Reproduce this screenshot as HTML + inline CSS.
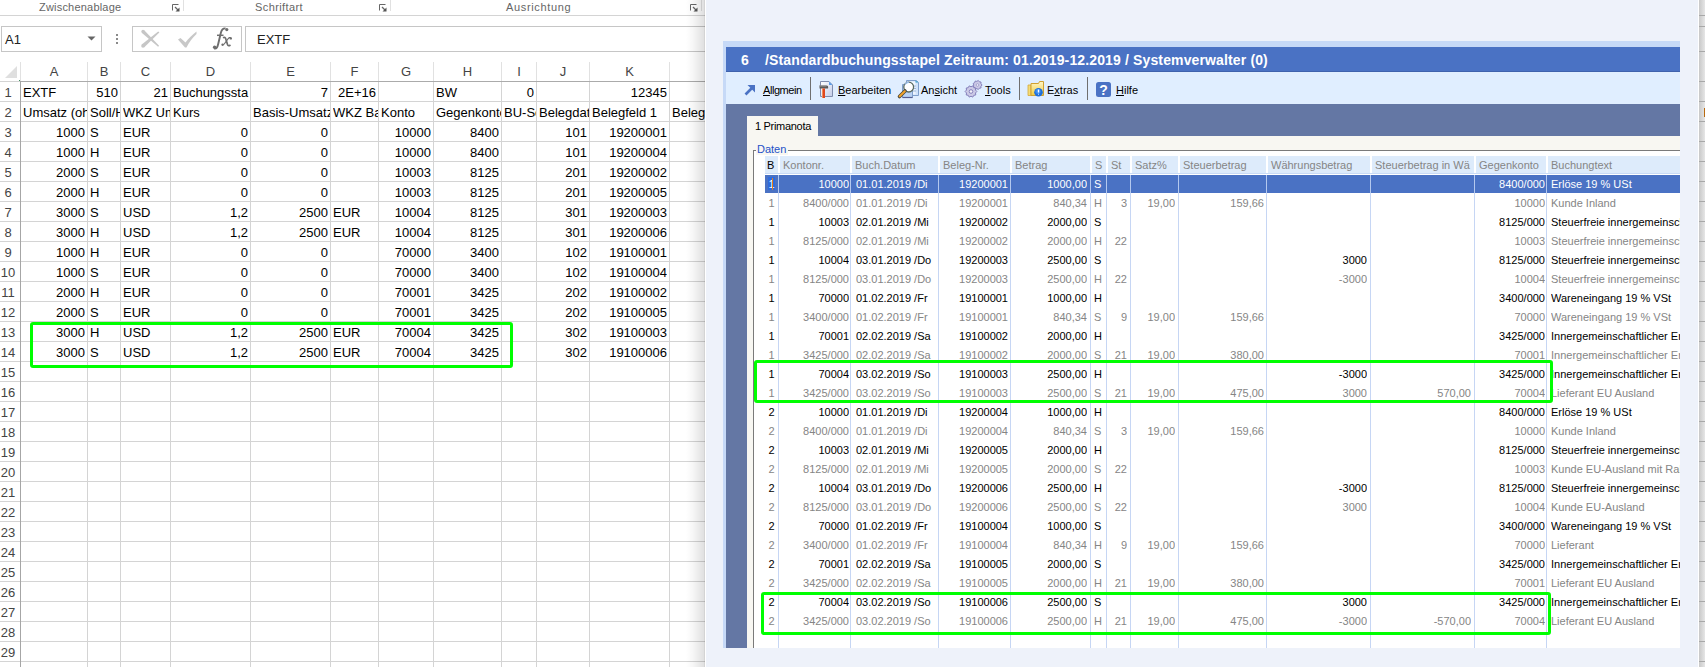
<!DOCTYPE html><html><head><meta charset="utf-8"><style>

*{box-sizing:border-box}
html,body{margin:0;padding:0;width:1705px;height:667px;overflow:hidden;background:#EEF2FA;font-family:"Liberation Sans", sans-serif}
.ab{position:absolute}
#xl{position:absolute;left:0;top:0;width:705px;height:667px;background:#fff;overflow:hidden}
.rl{position:absolute;font-size:11px;color:#666;white-space:nowrap}
.hl{position:absolute;height:1px}
.vl{position:absolute;width:1px}
.c{position:absolute;margin-top:1px;height:20px;line-height:20px;font-size:13px;color:#000;white-space:nowrap;overflow:hidden}
.r{text-align:right}
.ch{position:absolute;top:62px;height:19px;line-height:19px;font-size:13px;color:#444;text-align:center}
.rh{position:absolute;left:0;margin-top:1px;width:16px;height:20px;line-height:20px;font-size:13px;color:#444;text-align:center}
#dlg{position:absolute;left:723px;top:41px;width:957px;height:607px;background:#C6D9F7;overflow:hidden}
.t{position:absolute;height:19px;line-height:18px;font-size:11px;white-space:nowrap;overflow:hidden}
.k{color:#000}
.g{color:#858585}
.hd{position:absolute;top:156px;height:17px;background:#DDEBFB;font-size:11px;line-height:19px;color:#858585;white-space:nowrap;overflow:hidden;padding-left:3px}
.cl{position:absolute;top:173px;width:1px;height:475px;background:#C6D6F4}
.grn{position:absolute;border:3px solid #00FF00;border-radius:3px}

</style></head><body>
<div id="xl">
<div class="rl" style="left:39px;top:0px;line-height:14px;letter-spacing:0.2px">Zwischenablage</div>
<div class="rl" style="left:255px;top:0px;line-height:14px;letter-spacing:0.4px">Schriftart</div>
<div class="rl" style="left:506px;top:0px;line-height:14px;letter-spacing:0.65px">Ausrichtung</div>
<svg class="ab" style="left:172px;top:4px" width="8" height="8" viewBox="0 0 8 8"><path d="M0.5 6.5V0.5H6.5" stroke="#666" stroke-width="1" fill="none"/><path d="M3 3L6 6" stroke="#666" stroke-width="1.2"/><path d="M3.5 7.5H7.5V3.5Z" fill="#555"/></svg>
<svg class="ab" style="left:379px;top:4px" width="8" height="8" viewBox="0 0 8 8"><path d="M0.5 6.5V0.5H6.5" stroke="#666" stroke-width="1" fill="none"/><path d="M3 3L6 6" stroke="#666" stroke-width="1.2"/><path d="M3.5 7.5H7.5V3.5Z" fill="#555"/></svg>
<svg class="ab" style="left:690px;top:4px" width="8" height="8" viewBox="0 0 8 8"><path d="M0.5 6.5V0.5H6.5" stroke="#666" stroke-width="1" fill="none"/><path d="M3 3L6 6" stroke="#666" stroke-width="1.2"/><path d="M3.5 7.5H7.5V3.5Z" fill="#555"/></svg>
<div class="vl" style="left:183px;top:0;height:11px;background:#e1e1e1"></div>
<div class="vl" style="left:390px;top:0;height:11px;background:#e1e1e1"></div>
<div class="vl" style="left:701px;top:0;height:11px;background:#e1e1e1"></div>
<div class="hl" style="left:0;top:15px;width:705px;background:#d4d4d4"></div>
<div class="ab" style="left:1px;top:26px;width:101px;height:26px;border:1px solid #c6c6c6;background:#fff"></div>
<div class="ab" style="left:5px;top:28px;height:24px;line-height:24px;font-size:13px;color:#222">A1</div>
<svg class="ab" style="left:87px;top:36px" width="9" height="5"><path d="M0.5 0.5H8.5L4.5 4.5Z" fill="#666"/></svg>
<div class="ab" style="left:116px;top:34px;width:2px;height:2px;background:#8a8a8a"></div>
<div class="ab" style="left:116px;top:38px;width:2px;height:2px;background:#8a8a8a"></div>
<div class="ab" style="left:116px;top:42px;width:2px;height:2px;background:#8a8a8a"></div>
<div class="ab" style="left:132px;top:26px;width:110px;height:26px;border:1px solid #c6c6c6;background:#fff"></div>
<svg class="ab" style="left:140px;top:29px" width="22" height="20" viewBox="0 0 22 20"><g fill="#c6c6c6"><path d="M4.2 1.2L19.1 16.8L18.1 17.8L1.7 3.7Z"/><circle cx="3" cy="2.5" r="1.65"/><path d="M18.2 2.6Q19.2 3 19.3 3.6L4.3 18.3L1.7 15.5Z"/><circle cx="3" cy="16.9" r="1.8"/></g></svg>
<svg class="ab" style="left:177px;top:30px" width="22" height="19" viewBox="0 0 22 19"><path d="M1 9.5L3.5 8L8.5 12.5C11 9 15 5 19.5 1.5L19.5 4C15.5 8 12 12 9.5 17.5L8 17.5Z" fill="#c8c8c8"/></svg>
<svg class="ab" style="left:210px;top:26px" width="24" height="26" viewBox="0 0 24 26"><path d="M4.2 22.3C6.5 23 7.5 21 8.2 18L10.8 7C11.5 4 13 2.2 15.5 2.4" stroke="#6e6e6e" stroke-width="1.9" fill="none"/><circle cx="16.8" cy="3.6" r="1.6" fill="#6e6e6e"/><circle cx="4.6" cy="21.3" r="1.7" fill="#6e6e6e"/><path d="M7 9.3H13.5" stroke="#6e6e6e" stroke-width="1.5"/><path d="M13 11.8C14.5 11 15.5 11.5 16 13.5L17.5 18.5C18 20 19 20 20.5 19" stroke="#6e6e6e" stroke-width="1.7" fill="none"/><path d="M21 12C20 11 19 11.5 17.5 13.5L15 17C14 18.5 13 19.5 12 19" stroke="#6e6e6e" stroke-width="1.2" fill="none"/><circle cx="20.8" cy="12.4" r="1.2" fill="#6e6e6e"/><circle cx="12.6" cy="18.6" r="1.2" fill="#6e6e6e"/></svg>
<div class="ab" style="left:245px;top:26px;width:470px;height:26px;border:1px solid #c6c6c6;background:#fff"></div>
<div class="ab" style="left:257px;top:28px;height:24px;line-height:24px;font-size:13px;color:#222">EXTF</div>
<svg class="ab" style="left:5px;top:66px" width="13" height="12"><path d="M12 0V12H0Z" fill="#dfdfdf"/></svg>
<div class="ch" style="left:21px;width:66px">A</div>
<div class="ch" style="left:88px;width:32px">B</div>
<div class="ch" style="left:121px;width:49px">C</div>
<div class="ch" style="left:171px;width:79px">D</div>
<div class="ch" style="left:251px;width:79px">E</div>
<div class="ch" style="left:331px;width:47px">F</div>
<div class="ch" style="left:379px;width:54px">G</div>
<div class="ch" style="left:434px;width:67px">H</div>
<div class="ch" style="left:502px;width:34px">I</div>
<div class="ch" style="left:537px;width:52px">J</div>
<div class="ch" style="left:590px;width:79px">K</div>
<div class="ch" style="left:670px;width:90px">L</div>
<div class="vl" style="left:87px;top:62px;height:19px;background:#e1e1e1"></div>
<div class="vl" style="left:120px;top:62px;height:19px;background:#e1e1e1"></div>
<div class="vl" style="left:170px;top:62px;height:19px;background:#e1e1e1"></div>
<div class="vl" style="left:250px;top:62px;height:19px;background:#e1e1e1"></div>
<div class="vl" style="left:330px;top:62px;height:19px;background:#e1e1e1"></div>
<div class="vl" style="left:378px;top:62px;height:19px;background:#e1e1e1"></div>
<div class="vl" style="left:433px;top:62px;height:19px;background:#e1e1e1"></div>
<div class="vl" style="left:501px;top:62px;height:19px;background:#e1e1e1"></div>
<div class="vl" style="left:536px;top:62px;height:19px;background:#e1e1e1"></div>
<div class="vl" style="left:589px;top:62px;height:19px;background:#e1e1e1"></div>
<div class="vl" style="left:669px;top:62px;height:19px;background:#e1e1e1"></div>
<div class="vl" style="left:20px;top:62px;height:19px;background:#e1e1e1"></div>
<div class="hl" style="left:0;top:81px;width:20px;background:#d4d4d4"></div>
<div class="hl" style="left:20px;top:81px;width:685px;background:#ababab"></div>
<div class="hl" style="left:0;top:101px;width:20px;background:#d4d4d4"></div>
<div class="hl" style="left:21px;top:101px;width:684px;background:#d4d4d4"></div>
<div class="hl" style="left:0;top:121px;width:20px;background:#d4d4d4"></div>
<div class="hl" style="left:21px;top:121px;width:684px;background:#d4d4d4"></div>
<div class="hl" style="left:0;top:141px;width:20px;background:#d4d4d4"></div>
<div class="hl" style="left:21px;top:141px;width:684px;background:#d4d4d4"></div>
<div class="hl" style="left:0;top:161px;width:20px;background:#d4d4d4"></div>
<div class="hl" style="left:21px;top:161px;width:684px;background:#d4d4d4"></div>
<div class="hl" style="left:0;top:181px;width:20px;background:#d4d4d4"></div>
<div class="hl" style="left:21px;top:181px;width:684px;background:#d4d4d4"></div>
<div class="hl" style="left:0;top:201px;width:20px;background:#d4d4d4"></div>
<div class="hl" style="left:21px;top:201px;width:684px;background:#d4d4d4"></div>
<div class="hl" style="left:0;top:221px;width:20px;background:#d4d4d4"></div>
<div class="hl" style="left:21px;top:221px;width:684px;background:#d4d4d4"></div>
<div class="hl" style="left:0;top:241px;width:20px;background:#d4d4d4"></div>
<div class="hl" style="left:21px;top:241px;width:684px;background:#d4d4d4"></div>
<div class="hl" style="left:0;top:261px;width:20px;background:#d4d4d4"></div>
<div class="hl" style="left:21px;top:261px;width:684px;background:#d4d4d4"></div>
<div class="hl" style="left:0;top:281px;width:20px;background:#d4d4d4"></div>
<div class="hl" style="left:21px;top:281px;width:684px;background:#d4d4d4"></div>
<div class="hl" style="left:0;top:301px;width:20px;background:#d4d4d4"></div>
<div class="hl" style="left:21px;top:301px;width:684px;background:#d4d4d4"></div>
<div class="hl" style="left:0;top:321px;width:20px;background:#d4d4d4"></div>
<div class="hl" style="left:21px;top:321px;width:684px;background:#d4d4d4"></div>
<div class="hl" style="left:0;top:341px;width:20px;background:#d4d4d4"></div>
<div class="hl" style="left:21px;top:341px;width:684px;background:#d4d4d4"></div>
<div class="hl" style="left:0;top:361px;width:20px;background:#d4d4d4"></div>
<div class="hl" style="left:21px;top:361px;width:684px;background:#d4d4d4"></div>
<div class="hl" style="left:0;top:381px;width:20px;background:#d4d4d4"></div>
<div class="hl" style="left:21px;top:381px;width:684px;background:#d4d4d4"></div>
<div class="hl" style="left:0;top:401px;width:20px;background:#d4d4d4"></div>
<div class="hl" style="left:21px;top:401px;width:684px;background:#d4d4d4"></div>
<div class="hl" style="left:0;top:421px;width:20px;background:#d4d4d4"></div>
<div class="hl" style="left:21px;top:421px;width:684px;background:#d4d4d4"></div>
<div class="hl" style="left:0;top:441px;width:20px;background:#d4d4d4"></div>
<div class="hl" style="left:21px;top:441px;width:684px;background:#d4d4d4"></div>
<div class="hl" style="left:0;top:461px;width:20px;background:#d4d4d4"></div>
<div class="hl" style="left:21px;top:461px;width:684px;background:#d4d4d4"></div>
<div class="hl" style="left:0;top:481px;width:20px;background:#d4d4d4"></div>
<div class="hl" style="left:21px;top:481px;width:684px;background:#d4d4d4"></div>
<div class="hl" style="left:0;top:501px;width:20px;background:#d4d4d4"></div>
<div class="hl" style="left:21px;top:501px;width:684px;background:#d4d4d4"></div>
<div class="hl" style="left:0;top:521px;width:20px;background:#d4d4d4"></div>
<div class="hl" style="left:21px;top:521px;width:684px;background:#d4d4d4"></div>
<div class="hl" style="left:0;top:541px;width:20px;background:#d4d4d4"></div>
<div class="hl" style="left:21px;top:541px;width:684px;background:#d4d4d4"></div>
<div class="hl" style="left:0;top:561px;width:20px;background:#d4d4d4"></div>
<div class="hl" style="left:21px;top:561px;width:684px;background:#d4d4d4"></div>
<div class="hl" style="left:0;top:581px;width:20px;background:#d4d4d4"></div>
<div class="hl" style="left:21px;top:581px;width:684px;background:#d4d4d4"></div>
<div class="hl" style="left:0;top:601px;width:20px;background:#d4d4d4"></div>
<div class="hl" style="left:21px;top:601px;width:684px;background:#d4d4d4"></div>
<div class="hl" style="left:0;top:621px;width:20px;background:#d4d4d4"></div>
<div class="hl" style="left:21px;top:621px;width:684px;background:#d4d4d4"></div>
<div class="hl" style="left:0;top:641px;width:20px;background:#d4d4d4"></div>
<div class="hl" style="left:21px;top:641px;width:684px;background:#d4d4d4"></div>
<div class="hl" style="left:0;top:661px;width:20px;background:#d4d4d4"></div>
<div class="hl" style="left:21px;top:661px;width:684px;background:#d4d4d4"></div>
<div class="vl" style="left:87px;top:82px;height:585px;background:#d4d4d4"></div>
<div class="vl" style="left:120px;top:82px;height:585px;background:#d4d4d4"></div>
<div class="vl" style="left:170px;top:82px;height:585px;background:#d4d4d4"></div>
<div class="vl" style="left:250px;top:82px;height:585px;background:#d4d4d4"></div>
<div class="vl" style="left:330px;top:82px;height:585px;background:#d4d4d4"></div>
<div class="vl" style="left:378px;top:82px;height:585px;background:#d4d4d4"></div>
<div class="vl" style="left:433px;top:82px;height:585px;background:#d4d4d4"></div>
<div class="vl" style="left:501px;top:82px;height:585px;background:#d4d4d4"></div>
<div class="vl" style="left:536px;top:82px;height:585px;background:#d4d4d4"></div>
<div class="vl" style="left:589px;top:82px;height:585px;background:#d4d4d4"></div>
<div class="vl" style="left:669px;top:82px;height:585px;background:#d4d4d4"></div>
<div class="vl" style="left:20px;top:81px;height:586px;background:#a6a6a6"></div>
<div class="ab" style="left:19px;top:80px;width:1px;height:1px;background:#3f8f5f"></div>
<div class="rh" style="top:82px">1</div>
<div class="rh" style="top:102px">2</div>
<div class="rh" style="top:122px">3</div>
<div class="rh" style="top:142px">4</div>
<div class="rh" style="top:162px">5</div>
<div class="rh" style="top:182px">6</div>
<div class="rh" style="top:202px">7</div>
<div class="rh" style="top:222px">8</div>
<div class="rh" style="top:242px">9</div>
<div class="rh" style="top:262px">10</div>
<div class="rh" style="top:282px">11</div>
<div class="rh" style="top:302px">12</div>
<div class="rh" style="top:322px">13</div>
<div class="rh" style="top:342px">14</div>
<div class="rh" style="top:362px">15</div>
<div class="rh" style="top:382px">16</div>
<div class="rh" style="top:402px">17</div>
<div class="rh" style="top:422px">18</div>
<div class="rh" style="top:442px">19</div>
<div class="rh" style="top:462px">20</div>
<div class="rh" style="top:482px">21</div>
<div class="rh" style="top:502px">22</div>
<div class="rh" style="top:522px">23</div>
<div class="rh" style="top:542px">24</div>
<div class="rh" style="top:562px">25</div>
<div class="rh" style="top:582px">26</div>
<div class="rh" style="top:602px">27</div>
<div class="rh" style="top:622px">28</div>
<div class="rh" style="top:642px">29</div>
<div class="c" style="left:23px;top:82px;width:64px">EXTF</div>
<div class="c r" style="left:88px;top:82px;width:30px">510</div>
<div class="c r" style="left:121px;top:82px;width:47px">21</div>
<div class="c" style="left:173px;top:82px;width:77px">Buchungssta</div>
<div class="c r" style="left:251px;top:82px;width:77px">7</div>
<div class="c r" style="left:331px;top:82px;width:45px">2E+16</div>
<div class="c" style="left:436px;top:82px;width:65px">BW</div>
<div class="c r" style="left:502px;top:82px;width:32px">0</div>
<div class="c r" style="left:590px;top:82px;width:77px">12345</div>
<div class="c" style="left:23px;top:102px;width:64px">Umsatz (ohne Soll/Haben-Kz)</div>
<div class="c" style="left:90px;top:102px;width:30px">Soll/Haben</div>
<div class="c" style="left:123px;top:102px;width:47px">WKZ Umsatz</div>
<div class="c" style="left:173px;top:102px;width:77px">Kurs</div>
<div class="c" style="left:333px;top:102px;width:45px">WKZ Basis</div>
<div class="c" style="left:381px;top:102px;width:52px">Konto</div>
<div class="c" style="left:436px;top:102px;width:65px">Gegenkonto</div>
<div class="c" style="left:504px;top:102px;width:32px">BU-Schluessel</div>
<div class="c" style="left:539px;top:102px;width:50px">Belegdatum</div>
<div class="c" style="left:592px;top:102px;width:77px">Belegfeld 1</div>
<div class="c" style="left:672px;top:102px;width:88px">Belegfeld 2</div>
<div class="c r" style="left:21px;top:122px;width:64px">1000</div>
<div class="c" style="left:90px;top:122px;width:30px">S</div>
<div class="c" style="left:123px;top:122px;width:47px">EUR</div>
<div class="c r" style="left:171px;top:122px;width:77px">0</div>
<div class="c r" style="left:251px;top:122px;width:77px">0</div>
<div class="c r" style="left:379px;top:122px;width:52px">10000</div>
<div class="c r" style="left:434px;top:122px;width:65px">8400</div>
<div class="c r" style="left:537px;top:122px;width:50px">101</div>
<div class="c r" style="left:590px;top:122px;width:77px">19200001</div>
<div class="c r" style="left:21px;top:142px;width:64px">1000</div>
<div class="c" style="left:90px;top:142px;width:30px">H</div>
<div class="c" style="left:123px;top:142px;width:47px">EUR</div>
<div class="c r" style="left:171px;top:142px;width:77px">0</div>
<div class="c r" style="left:251px;top:142px;width:77px">0</div>
<div class="c r" style="left:379px;top:142px;width:52px">10000</div>
<div class="c r" style="left:434px;top:142px;width:65px">8400</div>
<div class="c r" style="left:537px;top:142px;width:50px">101</div>
<div class="c r" style="left:590px;top:142px;width:77px">19200004</div>
<div class="c r" style="left:21px;top:162px;width:64px">2000</div>
<div class="c" style="left:90px;top:162px;width:30px">S</div>
<div class="c" style="left:123px;top:162px;width:47px">EUR</div>
<div class="c r" style="left:171px;top:162px;width:77px">0</div>
<div class="c r" style="left:251px;top:162px;width:77px">0</div>
<div class="c r" style="left:379px;top:162px;width:52px">10003</div>
<div class="c r" style="left:434px;top:162px;width:65px">8125</div>
<div class="c r" style="left:537px;top:162px;width:50px">201</div>
<div class="c r" style="left:590px;top:162px;width:77px">19200002</div>
<div class="c r" style="left:21px;top:182px;width:64px">2000</div>
<div class="c" style="left:90px;top:182px;width:30px">H</div>
<div class="c" style="left:123px;top:182px;width:47px">EUR</div>
<div class="c r" style="left:171px;top:182px;width:77px">0</div>
<div class="c r" style="left:251px;top:182px;width:77px">0</div>
<div class="c r" style="left:379px;top:182px;width:52px">10003</div>
<div class="c r" style="left:434px;top:182px;width:65px">8125</div>
<div class="c r" style="left:537px;top:182px;width:50px">201</div>
<div class="c r" style="left:590px;top:182px;width:77px">19200005</div>
<div class="c r" style="left:21px;top:202px;width:64px">3000</div>
<div class="c" style="left:90px;top:202px;width:30px">S</div>
<div class="c" style="left:123px;top:202px;width:47px">USD</div>
<div class="c r" style="left:171px;top:202px;width:77px">1,2</div>
<div class="c r" style="left:251px;top:202px;width:77px">2500</div>
<div class="c" style="left:333px;top:202px;width:45px">EUR</div>
<div class="c r" style="left:379px;top:202px;width:52px">10004</div>
<div class="c r" style="left:434px;top:202px;width:65px">8125</div>
<div class="c r" style="left:537px;top:202px;width:50px">301</div>
<div class="c r" style="left:590px;top:202px;width:77px">19200003</div>
<div class="c r" style="left:21px;top:222px;width:64px">3000</div>
<div class="c" style="left:90px;top:222px;width:30px">H</div>
<div class="c" style="left:123px;top:222px;width:47px">USD</div>
<div class="c r" style="left:171px;top:222px;width:77px">1,2</div>
<div class="c r" style="left:251px;top:222px;width:77px">2500</div>
<div class="c" style="left:333px;top:222px;width:45px">EUR</div>
<div class="c r" style="left:379px;top:222px;width:52px">10004</div>
<div class="c r" style="left:434px;top:222px;width:65px">8125</div>
<div class="c r" style="left:537px;top:222px;width:50px">301</div>
<div class="c r" style="left:590px;top:222px;width:77px">19200006</div>
<div class="c r" style="left:21px;top:242px;width:64px">1000</div>
<div class="c" style="left:90px;top:242px;width:30px">H</div>
<div class="c" style="left:123px;top:242px;width:47px">EUR</div>
<div class="c r" style="left:171px;top:242px;width:77px">0</div>
<div class="c r" style="left:251px;top:242px;width:77px">0</div>
<div class="c r" style="left:379px;top:242px;width:52px">70000</div>
<div class="c r" style="left:434px;top:242px;width:65px">3400</div>
<div class="c r" style="left:537px;top:242px;width:50px">102</div>
<div class="c r" style="left:590px;top:242px;width:77px">19100001</div>
<div class="c r" style="left:21px;top:262px;width:64px">1000</div>
<div class="c" style="left:90px;top:262px;width:30px">S</div>
<div class="c" style="left:123px;top:262px;width:47px">EUR</div>
<div class="c r" style="left:171px;top:262px;width:77px">0</div>
<div class="c r" style="left:251px;top:262px;width:77px">0</div>
<div class="c r" style="left:379px;top:262px;width:52px">70000</div>
<div class="c r" style="left:434px;top:262px;width:65px">3400</div>
<div class="c r" style="left:537px;top:262px;width:50px">102</div>
<div class="c r" style="left:590px;top:262px;width:77px">19100004</div>
<div class="c r" style="left:21px;top:282px;width:64px">2000</div>
<div class="c" style="left:90px;top:282px;width:30px">H</div>
<div class="c" style="left:123px;top:282px;width:47px">EUR</div>
<div class="c r" style="left:171px;top:282px;width:77px">0</div>
<div class="c r" style="left:251px;top:282px;width:77px">0</div>
<div class="c r" style="left:379px;top:282px;width:52px">70001</div>
<div class="c r" style="left:434px;top:282px;width:65px">3425</div>
<div class="c r" style="left:537px;top:282px;width:50px">202</div>
<div class="c r" style="left:590px;top:282px;width:77px">19100002</div>
<div class="c r" style="left:21px;top:302px;width:64px">2000</div>
<div class="c" style="left:90px;top:302px;width:30px">S</div>
<div class="c" style="left:123px;top:302px;width:47px">EUR</div>
<div class="c r" style="left:171px;top:302px;width:77px">0</div>
<div class="c r" style="left:251px;top:302px;width:77px">0</div>
<div class="c r" style="left:379px;top:302px;width:52px">70001</div>
<div class="c r" style="left:434px;top:302px;width:65px">3425</div>
<div class="c r" style="left:537px;top:302px;width:50px">202</div>
<div class="c r" style="left:590px;top:302px;width:77px">19100005</div>
<div class="c r" style="left:21px;top:322px;width:64px">3000</div>
<div class="c" style="left:90px;top:322px;width:30px">H</div>
<div class="c" style="left:123px;top:322px;width:47px">USD</div>
<div class="c r" style="left:171px;top:322px;width:77px">1,2</div>
<div class="c r" style="left:251px;top:322px;width:77px">2500</div>
<div class="c" style="left:333px;top:322px;width:45px">EUR</div>
<div class="c r" style="left:379px;top:322px;width:52px">70004</div>
<div class="c r" style="left:434px;top:322px;width:65px">3425</div>
<div class="c r" style="left:537px;top:322px;width:50px">302</div>
<div class="c r" style="left:590px;top:322px;width:77px">19100003</div>
<div class="c r" style="left:21px;top:342px;width:64px">3000</div>
<div class="c" style="left:90px;top:342px;width:30px">S</div>
<div class="c" style="left:123px;top:342px;width:47px">USD</div>
<div class="c r" style="left:171px;top:342px;width:77px">1,2</div>
<div class="c r" style="left:251px;top:342px;width:77px">2500</div>
<div class="c" style="left:333px;top:342px;width:45px">EUR</div>
<div class="c r" style="left:379px;top:342px;width:52px">70004</div>
<div class="c r" style="left:434px;top:342px;width:65px">3425</div>
<div class="c r" style="left:537px;top:342px;width:50px">302</div>
<div class="c r" style="left:590px;top:342px;width:77px">19100006</div>
<div class="c" style="left:253px;top:102px;width:77px">Basis-Umsatz</div>
<div class="ab" style="left:686px;top:0;width:18px;height:667px;background:linear-gradient(to right,rgba(0,0,0,0),rgba(0,0,0,0.03) 35%,rgba(0,0,0,0.12))"></div>
<div class="ab" style="left:704px;top:0;width:1px;height:667px;background:rgba(0,0,0,0.17)"></div>
<div class="grn" style="left:30px;top:322px;width:483px;height:46px"></div>
</div>
<div class="ab" style="left:705px;top:0;width:1px;height:667px;background:#fff"></div>
<div class="ab" style="left:1698px;top:0;width:1px;height:667px;background:#fff"></div>
<div class="ab" style="left:1699px;top:0;width:6px;height:667px;background:linear-gradient(to right,#c8c8c8,#e6e6e6)"></div>
<div class="hl" style="left:1699px;top:81px;width:6px;background:#a8a8a8"></div>
<div class="hl" style="left:1699px;top:101px;width:6px;background:#a8a8a8"></div>
<div class="hl" style="left:1699px;top:121px;width:6px;background:#a8a8a8"></div>
<div class="hl" style="left:1699px;top:141px;width:6px;background:#a8a8a8"></div>
<div class="hl" style="left:1699px;top:161px;width:6px;background:#a8a8a8"></div>
<div class="hl" style="left:1699px;top:181px;width:6px;background:#a8a8a8"></div>
<div class="hl" style="left:1699px;top:201px;width:6px;background:#a8a8a8"></div>
<div class="hl" style="left:1699px;top:221px;width:6px;background:#a8a8a8"></div>
<div class="hl" style="left:1699px;top:241px;width:6px;background:#a8a8a8"></div>
<div class="hl" style="left:1699px;top:261px;width:6px;background:#a8a8a8"></div>
<div class="hl" style="left:1699px;top:281px;width:6px;background:#a8a8a8"></div>
<div class="hl" style="left:1699px;top:301px;width:6px;background:#a8a8a8"></div>
<div class="hl" style="left:1699px;top:321px;width:6px;background:#a8a8a8"></div>
<div class="hl" style="left:1699px;top:341px;width:6px;background:#a8a8a8"></div>
<div class="hl" style="left:1699px;top:361px;width:6px;background:#a8a8a8"></div>
<div class="hl" style="left:1699px;top:381px;width:6px;background:#a8a8a8"></div>
<div class="hl" style="left:1699px;top:401px;width:6px;background:#a8a8a8"></div>
<div class="hl" style="left:1699px;top:421px;width:6px;background:#a8a8a8"></div>
<div class="hl" style="left:1699px;top:441px;width:6px;background:#a8a8a8"></div>
<div class="hl" style="left:1699px;top:461px;width:6px;background:#a8a8a8"></div>
<div class="hl" style="left:1699px;top:481px;width:6px;background:#a8a8a8"></div>
<div class="hl" style="left:1699px;top:501px;width:6px;background:#a8a8a8"></div>
<div class="hl" style="left:1699px;top:521px;width:6px;background:#a8a8a8"></div>
<div class="hl" style="left:1699px;top:541px;width:6px;background:#a8a8a8"></div>
<div class="hl" style="left:1699px;top:561px;width:6px;background:#a8a8a8"></div>
<div class="hl" style="left:1699px;top:581px;width:6px;background:#a8a8a8"></div>
<div class="hl" style="left:1699px;top:601px;width:6px;background:#a8a8a8"></div>
<div class="hl" style="left:1699px;top:621px;width:6px;background:#a8a8a8"></div>
<div class="hl" style="left:1699px;top:641px;width:6px;background:#a8a8a8"></div>
<div class="hl" style="left:1699px;top:661px;width:6px;background:#a8a8a8"></div>
<div class="hl" style="left:1699px;top:15px;width:6px;background:#a8a8a8"></div>
<div class="hl" style="left:1699px;top:26px;width:6px;background:#a8a8a8"></div>
<div class="hl" style="left:1699px;top:51px;width:6px;background:#a8a8a8"></div>
<div class="ab" style="left:1704px;top:108px;width:1px;height:9px;background:#b86a10"></div>
<div id="dlg">
<div class="ab" style="left:3px;top:6px;width:960px;height:25px;background:#4A72C4"></div>
<div class="ab" style="left:3px;top:30px;width:960px;height:1px;background:#3F62AD"></div>
<div class="ab" style="left:3px;top:31px;width:960px;height:32px;background:#E0EEFF"></div>
<div class="ab" style="left:3px;top:63px;width:960px;height:550px;background:#6477A4"></div>
<div class="ab" style="left:24px;top:95px;width:960px;height:520px;background:#F8F7F2"></div>
<div class="ab" style="left:24px;top:75px;width:71px;height:20px;background:#F8F7F2"></div>
<div class="ab" style="left:18px;top:7px;height:25px;line-height:25px;font-weight:bold;font-size:14px;color:#fff;white-space:nowrap">6</div>
<div class="ab" style="left:42px;top:7px;height:25px;line-height:25px;font-weight:bold;font-size:14px;color:#fff;white-space:nowrap;letter-spacing:0.135px">/Standardbuchungsstapel Zeitraum: 01.2019-12.2019 / Systemverwalter (0)</div>
<div class="ab" style="left:40px;top:40px;height:18px;line-height:18px;font-size:11px;color:#000;white-space:nowrap;letter-spacing:-0.45px"><u>A</u>llgmein</div>
<div class="ab" style="left:115px;top:40px;height:18px;line-height:18px;font-size:11px;color:#000;white-space:nowrap;letter-spacing:0px"><u>B</u>earbeiten</div>
<div class="ab" style="left:198px;top:40px;height:18px;line-height:18px;font-size:11px;color:#000;white-space:nowrap;letter-spacing:0px">An<u>s</u>icht</div>
<div class="ab" style="left:262px;top:40px;height:18px;line-height:18px;font-size:11px;color:#000;white-space:nowrap;letter-spacing:0px"><u>T</u>ools</div>
<div class="ab" style="left:324px;top:40px;height:18px;line-height:18px;font-size:11px;color:#000;white-space:nowrap;letter-spacing:0px">E<u>x</u>tras</div>
<div class="ab" style="left:393px;top:40px;height:18px;line-height:18px;font-size:11px;color:#000;white-space:nowrap;letter-spacing:0px"><u>H</u>ilfe</div>
<div class="ab" style="left:87px;top:36px;width:1px;height:23px;background:#6f6f6f"></div>
<div class="ab" style="left:296px;top:36px;width:1px;height:23px;background:#6f6f6f"></div>
<div class="ab" style="left:364px;top:36px;width:1px;height:23px;background:#6f6f6f"></div>
<svg class="ab" style="left:21px;top:43px" width="12" height="12" viewBox="0 0 12 12"><path d="M1.5 10.5L9 3" stroke="#4A72C4" stroke-width="2.6"/><path d="M3.5 1H11V8.5Z" fill="#4A72C4"/></svg>
<svg class="ab" style="left:96px;top:39px" width="16" height="19" viewBox="0 0 16 19"><defs><linearGradient id="dg" x1="0" y1="0" x2="1" y2="1"><stop offset="0" stop-color="#ffffff"/><stop offset="1" stop-color="#c3cdea"/></linearGradient></defs><path d="M1.5 1.5H10L13.5 5V16.5H1.5Z" fill="url(#dg)" stroke="#7f8cae"/><path d="M10 1.5V5H13.5Z" fill="#5b9be6"/><path d="M0.5 5.5H7.5C9 5.5 9.5 6.5 9 8.5H0.5Z" fill="#5a5a5a"/><path d="M0.5 5.5H7.5V6.5H0.5Z" fill="#9a9a9a"/><path d="M3 8.5H6V18H3Z" fill="#e0461e"/><path d="M3 8.5H4V18H3Z" fill="#f08a5a"/></svg>
<svg class="ab" style="left:173px;top:37px" width="26" height="22" viewBox="0 0 26 22"><path d="M10.5 2.5H20.5L22.5 4.5V17.5H10.5Z" fill="#cfe2fa" stroke="#7f9fcc"/><path d="M11.5 3.5H19.5V16.5H11.5Z" fill="#eef5fe"/><path d="M19.5 2.5V4.5H22.5" fill="#3aa0c8"/><path d="M17 8H20M17 10.5H20M17 13H20" stroke="#8aaad6" stroke-width="0.8"/><path d="M6.5 6.5H16.5V19.5H6.5Z" fill="#b9d2f4" stroke="#7f9fcc"/><path d="M6.5 19.5H16.5" stroke="#565c90" stroke-width="1.2"/><circle cx="12.7" cy="9.1" r="4.9" fill="#ffffff" stroke="#5a6a60" stroke-width="1.3"/><path d="M9 6.5A4.5 4.5 0 0 1 13 4.4" stroke="#9cc0ee" stroke-width="1.1" fill="none"/><path d="M9 13L3.5 18.5" stroke="#4a4a40" stroke-width="3.6" stroke-linecap="round"/><path d="M8.8 13.2L3.7 18.3" stroke="#f2a22a" stroke-width="2" stroke-linecap="round"/></svg>
<svg class="ab" style="left:240px;top:38px" width="22" height="21" viewBox="0 0 22 21"><g fill="#cbc9e6" stroke="#7d77b5" stroke-width="0.9"><polygon points="19.10,6.00 17.96,7.26 18.02,8.96 16.34,9.19 15.30,10.53 13.86,9.62 12.20,9.98 11.68,8.37 10.18,7.57 10.82,6.00 10.18,4.43 11.68,3.63 12.20,2.02 13.86,2.38 15.30,1.47 16.34,2.81 18.02,3.04 17.96,4.74"/><polygon points="13.90,12.50 12.49,13.96 12.77,15.97 10.77,16.32 9.82,18.11 8.00,17.22 6.18,18.11 5.23,16.32 3.23,15.97 3.51,13.96 2.10,12.50 3.51,11.04 3.23,9.03 5.23,8.68 6.18,6.89 8.00,7.78 9.82,6.89 10.77,8.68 12.77,9.03 12.49,11.04"/></g><circle cx="14.5" cy="6" r="1.3" fill="#eeeef8" stroke="#8a84bd" stroke-width="0.6"/><circle cx="8" cy="12.5" r="1.8" fill="#f4f4fb" stroke="#7d77b5" stroke-width="0.9"/></svg>
<svg class="ab" style="left:303px;top:38px" width="20" height="20" viewBox="0 0 20 20"><defs><linearGradient id="fg" x1="0" y1="0" x2="0" y2="1"><stop offset="0" stop-color="#fff6c8"/><stop offset="1" stop-color="#f0cc40"/></linearGradient></defs><path d="M2 6H5V16.5H2Z" fill="#f4dc78" stroke="#d4a838" stroke-width="0.8"/><path d="M5 4.5H12.5L13.5 2.5H17.5V16.5H5Z" fill="url(#fg)" stroke="#d0a030" stroke-width="1"/><circle cx="12.5" cy="13.2" r="4.3" fill="#1f6fd8"/><circle cx="12" cy="12.3" r="2.6" fill="#3a8cf0"/><path d="M12.5 10.5V13.5" stroke="#fff" stroke-width="1.4"/><path d="M12.5 14.8V15.6" stroke="#fff" stroke-width="1"/></svg>
<svg class="ab" style="left:373px;top:41px" width="15" height="15" viewBox="0 0 15 15"><rect x="0" y="0" width="15" height="15" rx="2.5" fill="#4A72C4"/><text x="7.6" y="13" text-anchor="middle" font-family="Liberation Sans" font-weight="bold" font-size="14" fill="#fff">?</text></svg>
<div class="ab" style="left:32px;top:77px;height:16px;line-height:16px;font-size:11px;color:#000;white-space:nowrap;letter-spacing:-0.3px">1 Primanota</div>
<div class="ab" style="left:31px;top:110px;width:960px;height:500px;background:#fff"></div>
<div class="ab" style="left:30px;top:109px;width:1px;height:500px;background:#7a7a7a"></div>
<div class="ab" style="left:30px;top:109px;width:960px;height:1px;background:#7a7a7a"></div>
<div class="ab" style="left:33px;top:102px;width:32px;height:12px;background:#F8F7F2"></div>
<div class="ab" style="left:34px;top:101px;height:14px;line-height:14px;font-size:11px;color:#2452C8;white-space:nowrap">Daten</div>
<div class="hd" style="left:42px;top:115px;width:13px;color:#000;padding-left:2px">B</div>
<div class="hd" style="left:57px;top:115px;width:70px;color:#858585;padding-left:3px">Kontonr.</div>
<div class="hd" style="left:129px;top:115px;width:86px;color:#858585;padding-left:3px">Buch.Datum</div>
<div class="hd" style="left:217px;top:115px;width:70px;color:#858585;padding-left:3px">Beleg-Nr.</div>
<div class="hd" style="left:289px;top:115px;width:78px;color:#858585;padding-left:3px">Betrag</div>
<div class="hd" style="left:369px;top:115px;width:14px;color:#858585;padding-left:3px">S</div>
<div class="hd" style="left:385px;top:115px;width:22px;color:#858585;padding-left:3px">St</div>
<div class="hd" style="left:409px;top:115px;width:46px;color:#858585;padding-left:3px">Satz%</div>
<div class="hd" style="left:457px;top:115px;width:86px;color:#858585;padding-left:3px">Steuerbetrag</div>
<div class="hd" style="left:545px;top:115px;width:102px;color:#858585;padding-left:3px">Währungsbetrag</div>
<div class="hd" style="left:649px;top:115px;width:102px;color:#858585;padding-left:3px">Steuerbetrag in Wä</div>
<div class="hd" style="left:753px;top:115px;width:70px;color:#858585;padding-left:3px">Gegenkonto</div>
<div class="hd" style="left:825px;top:115px;width:152px;color:#858585;padding-left:3px">Buchungtext</div>
<div class="ab" style="left:42px;top:134px;width:960px;height:18px;background:#4A72C4"></div>
<div class="ab" style="left:55px;top:134px;width:1px;height:475px;background:#C6D6F4"></div>
<div class="ab" style="left:127px;top:134px;width:1px;height:475px;background:#C6D6F4"></div>
<div class="ab" style="left:215px;top:134px;width:1px;height:475px;background:#C6D6F4"></div>
<div class="ab" style="left:287px;top:134px;width:1px;height:475px;background:#C6D6F4"></div>
<div class="ab" style="left:367px;top:134px;width:1px;height:475px;background:#C6D6F4"></div>
<div class="ab" style="left:383px;top:134px;width:1px;height:475px;background:#C6D6F4"></div>
<div class="ab" style="left:407px;top:134px;width:1px;height:475px;background:#C6D6F4"></div>
<div class="ab" style="left:455px;top:134px;width:1px;height:475px;background:#C6D6F4"></div>
<div class="ab" style="left:543px;top:134px;width:1px;height:475px;background:#C6D6F4"></div>
<div class="ab" style="left:647px;top:134px;width:1px;height:475px;background:#C6D6F4"></div>
<div class="ab" style="left:751px;top:134px;width:1px;height:475px;background:#C6D6F4"></div>
<div class="ab" style="left:823px;top:134px;width:1px;height:475px;background:#C6D6F4"></div>
<div class="ab" style="left:42px;top:132px;width:960px;height:1px;background:#C8DAF6"></div>
<div class="ab" style="left:55px;top:134px;width:1px;height:18px;background:#b4c8ee"></div>
<div class="ab" style="left:127px;top:134px;width:1px;height:18px;background:#b4c8ee"></div>
<div class="ab" style="left:215px;top:134px;width:1px;height:18px;background:#b4c8ee"></div>
<div class="ab" style="left:287px;top:134px;width:1px;height:18px;background:#b4c8ee"></div>
<div class="ab" style="left:367px;top:134px;width:1px;height:18px;background:#b4c8ee"></div>
<div class="ab" style="left:383px;top:134px;width:1px;height:18px;background:#b4c8ee"></div>
<div class="ab" style="left:407px;top:134px;width:1px;height:18px;background:#b4c8ee"></div>
<div class="ab" style="left:455px;top:134px;width:1px;height:18px;background:#b4c8ee"></div>
<div class="ab" style="left:543px;top:134px;width:1px;height:18px;background:#b4c8ee"></div>
<div class="ab" style="left:647px;top:134px;width:1px;height:18px;background:#b4c8ee"></div>
<div class="ab" style="left:751px;top:134px;width:1px;height:18px;background:#b4c8ee"></div>
<div class="ab" style="left:823px;top:134px;width:1px;height:18px;background:#b4c8ee"></div>
<div class="ab" style="left:45px;top:136px;width:7px;height:13px;background:#2E6BDD"></div>
<div class="t k" style="left:42px;top:134px;width:13px;text-align:center;color:#fff;">1</div>
<div class="t k" style="left:56px;top:134px;width:70px;text-align:right;color:#fff;">10000</div>
<div class="t k" style="left:133px;top:134px;width:82px;color:#fff;">01.01.2019 /Di</div>
<div class="t k" style="left:216px;top:134px;width:69px;text-align:right;color:#fff;">19200001</div>
<div class="t k" style="left:288px;top:134px;width:76px;text-align:right;color:#fff;">1000,00</div>
<div class="t k" style="left:371px;top:134px;width:12px;color:#fff;">S</div>
<div class="t k" style="left:752px;top:134px;width:70px;text-align:right;color:#fff;">8400/000</div>
<div class="t k" style="left:828px;top:134px;width:149px;color:#fff;">Erlöse 19 % USt</div>
<div class="t g" style="left:42px;top:153px;width:13px;text-align:center;">1</div>
<div class="t g" style="left:56px;top:153px;width:70px;text-align:right;">8400/000</div>
<div class="t g" style="left:133px;top:153px;width:82px;">01.01.2019 /Di</div>
<div class="t g" style="left:216px;top:153px;width:69px;text-align:right;">19200001</div>
<div class="t g" style="left:288px;top:153px;width:76px;text-align:right;">840,34</div>
<div class="t g" style="left:371px;top:153px;width:12px;">H</div>
<div class="t g" style="left:384px;top:153px;width:20px;text-align:right;">3</div>
<div class="t g" style="left:408px;top:153px;width:44px;text-align:right;">19,00</div>
<div class="t g" style="left:456px;top:153px;width:85px;text-align:right;">159,66</div>
<div class="t g" style="left:752px;top:153px;width:70px;text-align:right;">10000</div>
<div class="t g" style="left:828px;top:153px;width:149px;">Kunde Inland</div>
<div class="t k" style="left:42px;top:172px;width:13px;text-align:center;">1</div>
<div class="t k" style="left:56px;top:172px;width:70px;text-align:right;">10003</div>
<div class="t k" style="left:133px;top:172px;width:82px;">02.01.2019 /Mi</div>
<div class="t k" style="left:216px;top:172px;width:69px;text-align:right;">19200002</div>
<div class="t k" style="left:288px;top:172px;width:76px;text-align:right;">2000,00</div>
<div class="t k" style="left:371px;top:172px;width:12px;">S</div>
<div class="t k" style="left:752px;top:172px;width:70px;text-align:right;">8125/000</div>
<div class="t k" style="left:828px;top:172px;width:149px;">Steuerfreie innergemeinschaftliche</div>
<div class="t g" style="left:42px;top:191px;width:13px;text-align:center;">1</div>
<div class="t g" style="left:56px;top:191px;width:70px;text-align:right;">8125/000</div>
<div class="t g" style="left:133px;top:191px;width:82px;">02.01.2019 /Mi</div>
<div class="t g" style="left:216px;top:191px;width:69px;text-align:right;">19200002</div>
<div class="t g" style="left:288px;top:191px;width:76px;text-align:right;">2000,00</div>
<div class="t g" style="left:371px;top:191px;width:12px;">H</div>
<div class="t g" style="left:384px;top:191px;width:20px;text-align:right;">22</div>
<div class="t g" style="left:752px;top:191px;width:70px;text-align:right;">10003</div>
<div class="t g" style="left:828px;top:191px;width:149px;">Steuerfreie innergemeinschaftliche</div>
<div class="t k" style="left:42px;top:210px;width:13px;text-align:center;">1</div>
<div class="t k" style="left:56px;top:210px;width:70px;text-align:right;">10004</div>
<div class="t k" style="left:133px;top:210px;width:82px;">03.01.2019 /Do</div>
<div class="t k" style="left:216px;top:210px;width:69px;text-align:right;">19200003</div>
<div class="t k" style="left:288px;top:210px;width:76px;text-align:right;">2500,00</div>
<div class="t k" style="left:371px;top:210px;width:12px;">S</div>
<div class="t k" style="left:544px;top:210px;width:100px;text-align:right;">3000</div>
<div class="t k" style="left:752px;top:210px;width:70px;text-align:right;">8125/000</div>
<div class="t k" style="left:828px;top:210px;width:149px;">Steuerfreie innergemeinschaftliche</div>
<div class="t g" style="left:42px;top:229px;width:13px;text-align:center;">1</div>
<div class="t g" style="left:56px;top:229px;width:70px;text-align:right;">8125/000</div>
<div class="t g" style="left:133px;top:229px;width:82px;">03.01.2019 /Do</div>
<div class="t g" style="left:216px;top:229px;width:69px;text-align:right;">19200003</div>
<div class="t g" style="left:288px;top:229px;width:76px;text-align:right;">2500,00</div>
<div class="t g" style="left:371px;top:229px;width:12px;">H</div>
<div class="t g" style="left:384px;top:229px;width:20px;text-align:right;">22</div>
<div class="t g" style="left:544px;top:229px;width:100px;text-align:right;">-3000</div>
<div class="t g" style="left:752px;top:229px;width:70px;text-align:right;">10004</div>
<div class="t g" style="left:828px;top:229px;width:149px;">Steuerfreie innergemeinschaftliche</div>
<div class="t k" style="left:42px;top:248px;width:13px;text-align:center;">1</div>
<div class="t k" style="left:56px;top:248px;width:70px;text-align:right;">70000</div>
<div class="t k" style="left:133px;top:248px;width:82px;">01.02.2019 /Fr</div>
<div class="t k" style="left:216px;top:248px;width:69px;text-align:right;">19100001</div>
<div class="t k" style="left:288px;top:248px;width:76px;text-align:right;">1000,00</div>
<div class="t k" style="left:371px;top:248px;width:12px;">H</div>
<div class="t k" style="left:752px;top:248px;width:70px;text-align:right;">3400/000</div>
<div class="t k" style="left:828px;top:248px;width:149px;">Wareneingang 19 % VSt</div>
<div class="t g" style="left:42px;top:267px;width:13px;text-align:center;">1</div>
<div class="t g" style="left:56px;top:267px;width:70px;text-align:right;">3400/000</div>
<div class="t g" style="left:133px;top:267px;width:82px;">01.02.2019 /Fr</div>
<div class="t g" style="left:216px;top:267px;width:69px;text-align:right;">19100001</div>
<div class="t g" style="left:288px;top:267px;width:76px;text-align:right;">840,34</div>
<div class="t g" style="left:371px;top:267px;width:12px;">S</div>
<div class="t g" style="left:384px;top:267px;width:20px;text-align:right;">9</div>
<div class="t g" style="left:408px;top:267px;width:44px;text-align:right;">19,00</div>
<div class="t g" style="left:456px;top:267px;width:85px;text-align:right;">159,66</div>
<div class="t g" style="left:752px;top:267px;width:70px;text-align:right;">70000</div>
<div class="t g" style="left:828px;top:267px;width:149px;">Wareneingang 19 % VSt</div>
<div class="t k" style="left:42px;top:286px;width:13px;text-align:center;">1</div>
<div class="t k" style="left:56px;top:286px;width:70px;text-align:right;">70001</div>
<div class="t k" style="left:133px;top:286px;width:82px;">02.02.2019 /Sa</div>
<div class="t k" style="left:216px;top:286px;width:69px;text-align:right;">19100002</div>
<div class="t k" style="left:288px;top:286px;width:76px;text-align:right;">2000,00</div>
<div class="t k" style="left:371px;top:286px;width:12px;">H</div>
<div class="t k" style="left:752px;top:286px;width:70px;text-align:right;">3425/000</div>
<div class="t k" style="left:828px;top:286px;width:149px;">Innergemeinschaftlicher Erwerb</div>
<div class="t g" style="left:42px;top:305px;width:13px;text-align:center;">1</div>
<div class="t g" style="left:56px;top:305px;width:70px;text-align:right;">3425/000</div>
<div class="t g" style="left:133px;top:305px;width:82px;">02.02.2019 /Sa</div>
<div class="t g" style="left:216px;top:305px;width:69px;text-align:right;">19100002</div>
<div class="t g" style="left:288px;top:305px;width:76px;text-align:right;">2000,00</div>
<div class="t g" style="left:371px;top:305px;width:12px;">S</div>
<div class="t g" style="left:384px;top:305px;width:20px;text-align:right;">21</div>
<div class="t g" style="left:408px;top:305px;width:44px;text-align:right;">19,00</div>
<div class="t g" style="left:456px;top:305px;width:85px;text-align:right;">380,00</div>
<div class="t g" style="left:752px;top:305px;width:70px;text-align:right;">70001</div>
<div class="t g" style="left:828px;top:305px;width:149px;">Innergemeinschaftlicher Erwerb</div>
<div class="t k" style="left:42px;top:324px;width:13px;text-align:center;">1</div>
<div class="t k" style="left:56px;top:324px;width:70px;text-align:right;">70004</div>
<div class="t k" style="left:133px;top:324px;width:82px;">03.02.2019 /So</div>
<div class="t k" style="left:216px;top:324px;width:69px;text-align:right;">19100003</div>
<div class="t k" style="left:288px;top:324px;width:76px;text-align:right;">2500,00</div>
<div class="t k" style="left:371px;top:324px;width:12px;">H</div>
<div class="t k" style="left:544px;top:324px;width:100px;text-align:right;">-3000</div>
<div class="t k" style="left:752px;top:324px;width:70px;text-align:right;">3425/000</div>
<div class="t k" style="left:828px;top:324px;width:149px;">Innergemeinschaftlicher Erwerb</div>
<div class="t g" style="left:42px;top:343px;width:13px;text-align:center;">1</div>
<div class="t g" style="left:56px;top:343px;width:70px;text-align:right;">3425/000</div>
<div class="t g" style="left:133px;top:343px;width:82px;">03.02.2019 /So</div>
<div class="t g" style="left:216px;top:343px;width:69px;text-align:right;">19100003</div>
<div class="t g" style="left:288px;top:343px;width:76px;text-align:right;">2500,00</div>
<div class="t g" style="left:371px;top:343px;width:12px;">S</div>
<div class="t g" style="left:384px;top:343px;width:20px;text-align:right;">21</div>
<div class="t g" style="left:408px;top:343px;width:44px;text-align:right;">19,00</div>
<div class="t g" style="left:456px;top:343px;width:85px;text-align:right;">475,00</div>
<div class="t g" style="left:544px;top:343px;width:100px;text-align:right;">3000</div>
<div class="t g" style="left:648px;top:343px;width:100px;text-align:right;">570,00</div>
<div class="t g" style="left:752px;top:343px;width:70px;text-align:right;">70004</div>
<div class="t g" style="left:828px;top:343px;width:149px;">Lieferant EU Ausland</div>
<div class="t k" style="left:42px;top:362px;width:13px;text-align:center;">2</div>
<div class="t k" style="left:56px;top:362px;width:70px;text-align:right;">10000</div>
<div class="t k" style="left:133px;top:362px;width:82px;">01.01.2019 /Di</div>
<div class="t k" style="left:216px;top:362px;width:69px;text-align:right;">19200004</div>
<div class="t k" style="left:288px;top:362px;width:76px;text-align:right;">1000,00</div>
<div class="t k" style="left:371px;top:362px;width:12px;">H</div>
<div class="t k" style="left:752px;top:362px;width:70px;text-align:right;">8400/000</div>
<div class="t k" style="left:828px;top:362px;width:149px;">Erlöse 19 % USt</div>
<div class="t g" style="left:42px;top:381px;width:13px;text-align:center;">2</div>
<div class="t g" style="left:56px;top:381px;width:70px;text-align:right;">8400/000</div>
<div class="t g" style="left:133px;top:381px;width:82px;">01.01.2019 /Di</div>
<div class="t g" style="left:216px;top:381px;width:69px;text-align:right;">19200004</div>
<div class="t g" style="left:288px;top:381px;width:76px;text-align:right;">840,34</div>
<div class="t g" style="left:371px;top:381px;width:12px;">S</div>
<div class="t g" style="left:384px;top:381px;width:20px;text-align:right;">3</div>
<div class="t g" style="left:408px;top:381px;width:44px;text-align:right;">19,00</div>
<div class="t g" style="left:456px;top:381px;width:85px;text-align:right;">159,66</div>
<div class="t g" style="left:752px;top:381px;width:70px;text-align:right;">10000</div>
<div class="t g" style="left:828px;top:381px;width:149px;">Kunde Inland</div>
<div class="t k" style="left:42px;top:400px;width:13px;text-align:center;">2</div>
<div class="t k" style="left:56px;top:400px;width:70px;text-align:right;">10003</div>
<div class="t k" style="left:133px;top:400px;width:82px;">02.01.2019 /Mi</div>
<div class="t k" style="left:216px;top:400px;width:69px;text-align:right;">19200005</div>
<div class="t k" style="left:288px;top:400px;width:76px;text-align:right;">2000,00</div>
<div class="t k" style="left:371px;top:400px;width:12px;">H</div>
<div class="t k" style="left:752px;top:400px;width:70px;text-align:right;">8125/000</div>
<div class="t k" style="left:828px;top:400px;width:149px;">Steuerfreie innergemeinschaftliche</div>
<div class="t g" style="left:42px;top:419px;width:13px;text-align:center;">2</div>
<div class="t g" style="left:56px;top:419px;width:70px;text-align:right;">8125/000</div>
<div class="t g" style="left:133px;top:419px;width:82px;">02.01.2019 /Mi</div>
<div class="t g" style="left:216px;top:419px;width:69px;text-align:right;">19200005</div>
<div class="t g" style="left:288px;top:419px;width:76px;text-align:right;">2000,00</div>
<div class="t g" style="left:371px;top:419px;width:12px;">S</div>
<div class="t g" style="left:384px;top:419px;width:20px;text-align:right;">22</div>
<div class="t g" style="left:752px;top:419px;width:70px;text-align:right;">10003</div>
<div class="t g" style="left:828px;top:419px;width:149px;">Kunde EU-Ausland mit Rabatt</div>
<div class="t k" style="left:42px;top:438px;width:13px;text-align:center;">2</div>
<div class="t k" style="left:56px;top:438px;width:70px;text-align:right;">10004</div>
<div class="t k" style="left:133px;top:438px;width:82px;">03.01.2019 /Do</div>
<div class="t k" style="left:216px;top:438px;width:69px;text-align:right;">19200006</div>
<div class="t k" style="left:288px;top:438px;width:76px;text-align:right;">2500,00</div>
<div class="t k" style="left:371px;top:438px;width:12px;">H</div>
<div class="t k" style="left:544px;top:438px;width:100px;text-align:right;">-3000</div>
<div class="t k" style="left:752px;top:438px;width:70px;text-align:right;">8125/000</div>
<div class="t k" style="left:828px;top:438px;width:149px;">Steuerfreie innergemeinschaftliche</div>
<div class="t g" style="left:42px;top:457px;width:13px;text-align:center;">2</div>
<div class="t g" style="left:56px;top:457px;width:70px;text-align:right;">8125/000</div>
<div class="t g" style="left:133px;top:457px;width:82px;">03.01.2019 /Do</div>
<div class="t g" style="left:216px;top:457px;width:69px;text-align:right;">19200006</div>
<div class="t g" style="left:288px;top:457px;width:76px;text-align:right;">2500,00</div>
<div class="t g" style="left:371px;top:457px;width:12px;">S</div>
<div class="t g" style="left:384px;top:457px;width:20px;text-align:right;">22</div>
<div class="t g" style="left:544px;top:457px;width:100px;text-align:right;">3000</div>
<div class="t g" style="left:752px;top:457px;width:70px;text-align:right;">10004</div>
<div class="t g" style="left:828px;top:457px;width:149px;">Kunde EU-Ausland</div>
<div class="t k" style="left:42px;top:476px;width:13px;text-align:center;">2</div>
<div class="t k" style="left:56px;top:476px;width:70px;text-align:right;">70000</div>
<div class="t k" style="left:133px;top:476px;width:82px;">01.02.2019 /Fr</div>
<div class="t k" style="left:216px;top:476px;width:69px;text-align:right;">19100004</div>
<div class="t k" style="left:288px;top:476px;width:76px;text-align:right;">1000,00</div>
<div class="t k" style="left:371px;top:476px;width:12px;">S</div>
<div class="t k" style="left:752px;top:476px;width:70px;text-align:right;">3400/000</div>
<div class="t k" style="left:828px;top:476px;width:149px;">Wareneingang 19 % VSt</div>
<div class="t g" style="left:42px;top:495px;width:13px;text-align:center;">2</div>
<div class="t g" style="left:56px;top:495px;width:70px;text-align:right;">3400/000</div>
<div class="t g" style="left:133px;top:495px;width:82px;">01.02.2019 /Fr</div>
<div class="t g" style="left:216px;top:495px;width:69px;text-align:right;">19100004</div>
<div class="t g" style="left:288px;top:495px;width:76px;text-align:right;">840,34</div>
<div class="t g" style="left:371px;top:495px;width:12px;">H</div>
<div class="t g" style="left:384px;top:495px;width:20px;text-align:right;">9</div>
<div class="t g" style="left:408px;top:495px;width:44px;text-align:right;">19,00</div>
<div class="t g" style="left:456px;top:495px;width:85px;text-align:right;">159,66</div>
<div class="t g" style="left:752px;top:495px;width:70px;text-align:right;">70000</div>
<div class="t g" style="left:828px;top:495px;width:149px;">Lieferant</div>
<div class="t k" style="left:42px;top:514px;width:13px;text-align:center;">2</div>
<div class="t k" style="left:56px;top:514px;width:70px;text-align:right;">70001</div>
<div class="t k" style="left:133px;top:514px;width:82px;">02.02.2019 /Sa</div>
<div class="t k" style="left:216px;top:514px;width:69px;text-align:right;">19100005</div>
<div class="t k" style="left:288px;top:514px;width:76px;text-align:right;">2000,00</div>
<div class="t k" style="left:371px;top:514px;width:12px;">S</div>
<div class="t k" style="left:752px;top:514px;width:70px;text-align:right;">3425/000</div>
<div class="t k" style="left:828px;top:514px;width:149px;">Innergemeinschaftlicher Erwerb</div>
<div class="t g" style="left:42px;top:533px;width:13px;text-align:center;">2</div>
<div class="t g" style="left:56px;top:533px;width:70px;text-align:right;">3425/000</div>
<div class="t g" style="left:133px;top:533px;width:82px;">02.02.2019 /Sa</div>
<div class="t g" style="left:216px;top:533px;width:69px;text-align:right;">19100005</div>
<div class="t g" style="left:288px;top:533px;width:76px;text-align:right;">2000,00</div>
<div class="t g" style="left:371px;top:533px;width:12px;">H</div>
<div class="t g" style="left:384px;top:533px;width:20px;text-align:right;">21</div>
<div class="t g" style="left:408px;top:533px;width:44px;text-align:right;">19,00</div>
<div class="t g" style="left:456px;top:533px;width:85px;text-align:right;">380,00</div>
<div class="t g" style="left:752px;top:533px;width:70px;text-align:right;">70001</div>
<div class="t g" style="left:828px;top:533px;width:149px;">Lieferant EU Ausland</div>
<div class="t k" style="left:42px;top:552px;width:13px;text-align:center;">2</div>
<div class="t k" style="left:56px;top:552px;width:70px;text-align:right;">70004</div>
<div class="t k" style="left:133px;top:552px;width:82px;">03.02.2019 /So</div>
<div class="t k" style="left:216px;top:552px;width:69px;text-align:right;">19100006</div>
<div class="t k" style="left:288px;top:552px;width:76px;text-align:right;">2500,00</div>
<div class="t k" style="left:371px;top:552px;width:12px;">S</div>
<div class="t k" style="left:544px;top:552px;width:100px;text-align:right;">3000</div>
<div class="t k" style="left:752px;top:552px;width:70px;text-align:right;">3425/000</div>
<div class="t k" style="left:828px;top:552px;width:149px;">Innergemeinschaftlicher Erwerb</div>
<div class="t g" style="left:42px;top:571px;width:13px;text-align:center;">2</div>
<div class="t g" style="left:56px;top:571px;width:70px;text-align:right;">3425/000</div>
<div class="t g" style="left:133px;top:571px;width:82px;">03.02.2019 /So</div>
<div class="t g" style="left:216px;top:571px;width:69px;text-align:right;">19100006</div>
<div class="t g" style="left:288px;top:571px;width:76px;text-align:right;">2500,00</div>
<div class="t g" style="left:371px;top:571px;width:12px;">H</div>
<div class="t g" style="left:384px;top:571px;width:20px;text-align:right;">21</div>
<div class="t g" style="left:408px;top:571px;width:44px;text-align:right;">19,00</div>
<div class="t g" style="left:456px;top:571px;width:85px;text-align:right;">475,00</div>
<div class="t g" style="left:544px;top:571px;width:100px;text-align:right;">-3000</div>
<div class="t g" style="left:648px;top:571px;width:100px;text-align:right;">-570,00</div>
<div class="t g" style="left:752px;top:571px;width:70px;text-align:right;">70004</div>
<div class="t g" style="left:828px;top:571px;width:149px;">Lieferant EU Ausland</div>
<div class="ab" style="left:49px;top:137px;width:1px;height:12px;background:#E87A1A"></div>
</div>
<div class="grn" style="left:754px;top:360px;width:799px;height:43px"></div>
<div class="grn" style="left:761px;top:592px;width:790px;height:43px"></div>
</body></html>
